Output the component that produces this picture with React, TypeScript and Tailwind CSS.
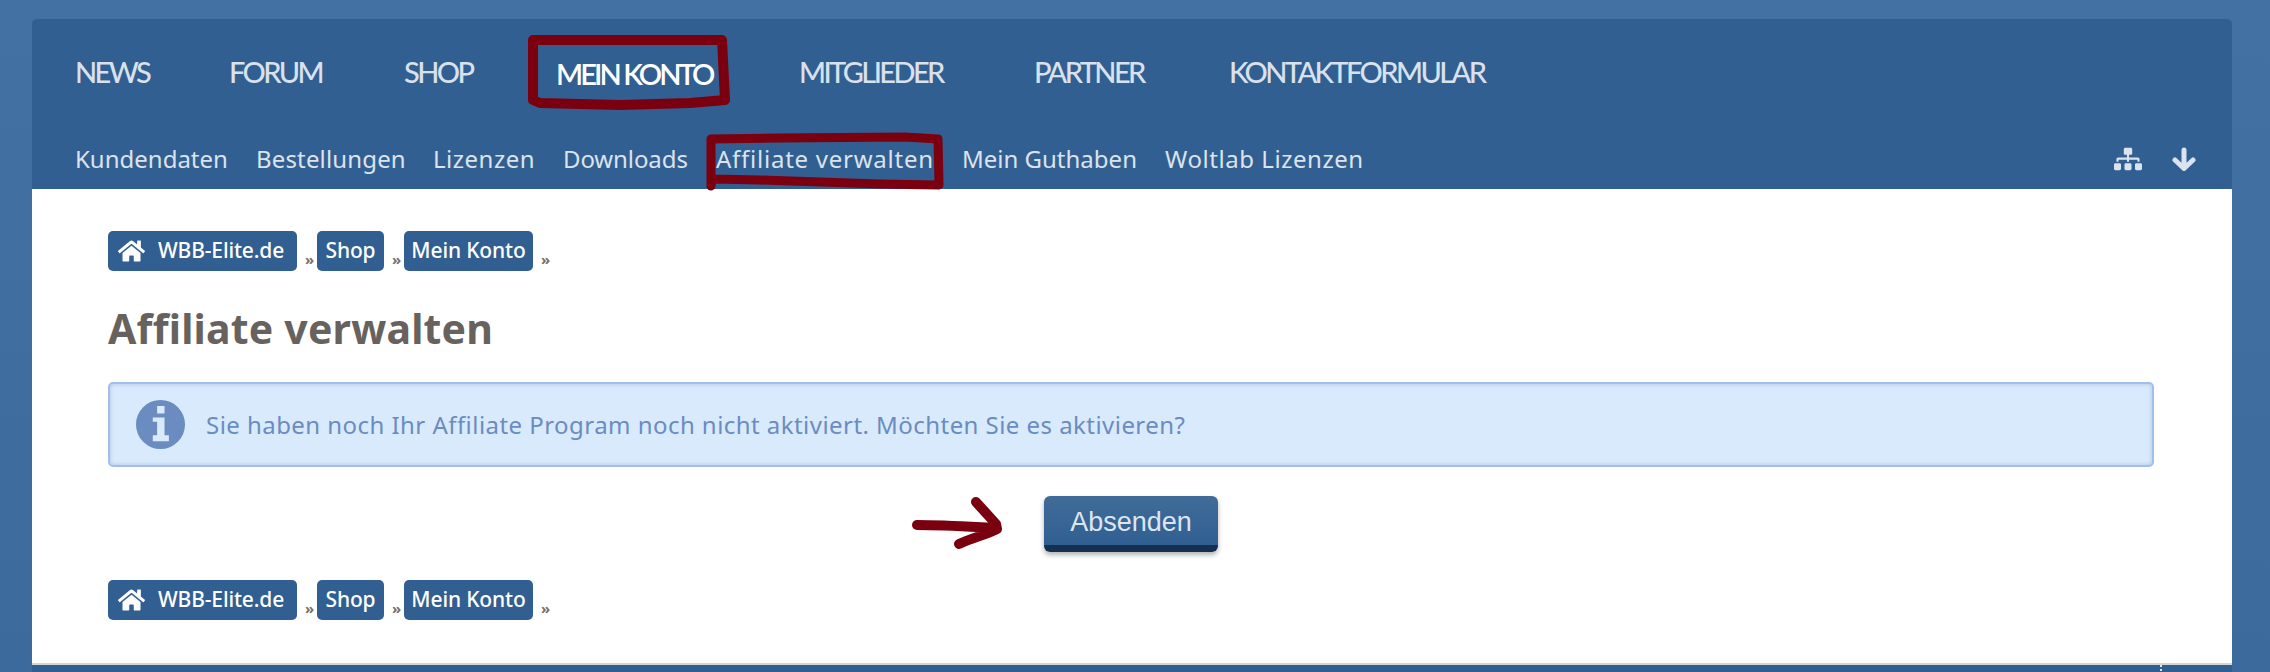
import { FaSitemap, FaHome } from "react-icons/fa";

const main = [
  ["NEWS", 70],
  ["FORUM", 91],
  ["SHOP", 68],
  ["MEIN KONTO", 159],
  ["MITGLIEDER", 151],
  ["PARTNER", 111],
  ["KONTAKTFORMULAR", 257],
] as const;
const sub = [
  ["Kundendaten", 153, ""],
  ["Bestellungen", 149, "tracking-[0.15px]"],
  ["Lizenzen", 102, "tracking-[0.5px]"],
  ["Downloads", 125, "tracking-[-0.1px]"],
  ["Affiliate verwalten", 218, "tracking-[0.75px]"],
  ["Mein Guthaben", 175, ""],
  ["Woltlab Lizenzen", 199, "tracking-[0.55px]"],
] as const;

function Crumbs() {
  const chip = "flex h-10 items-center rounded-[5px] bg-[#325f91] text-white text-[21px] font-medium tracking-[-0.15px]";
  const sep = "w-5 pl-[5px] text-center text-[#77706b] text-[15px] font-bold self-end leading-[24px]";
  return (
    <div className="flex items-center">
      <a className={`${chip} w-[189px] pl-[10px]`}>
        <FaHome className="w-[27px] h-[24px] shrink-0" />
        <span className="ml-[13px]">WBB-Elite.de</span>
      </a>
      <span className={sep}>»</span>
      <a className={`${chip} w-[67px] justify-center`}>Shop</a>
      <span className={sep}>»</span>
      <a className={`${chip} w-[129px] justify-center`}>Mein Konto</a>
      <span className={sep}>»</span>
    </div>
  );
}

export default function App() {
  return (
    <div className="relative w-[2270px] h-[672px] overflow-hidden bg-gradient-to-b from-[#4371a4] to-[#3c6a9c] pt-[19px] pl-8 font-['Noto_Sans','Open_Sans',sans-serif] [font-variant-ligatures:none]">
      <div className="w-[2200px] h-[653px] bg-[#325f91] rounded-t-[5px]">
        <nav className="flex h-[98px] gap-[84px] pl-[43px] pt-[33px] font-['Lato',sans-serif]">
          {main.map(([t, w]) => (
            <a
              key={t}
              style={{ width: w }}
              className={`h-[40px] whitespace-nowrap text-[29px] leading-[40px] ${t === "MEIN KONTO" ? "mt-[2px] font-semibold tracking-[-2.9px] text-white" : "font-medium tracking-[-2.6px] text-[#d9e1ec]"}`}
            >
              {t}
            </a>
          ))}
        </nav>
        <div className="flex h-[72px] items-start justify-between pl-[43px] pr-[36px] pt-[22px]">
          <div className="flex gap-[28px]">
            {sub.map(([t, w, c]) => (
              <a key={t} style={{ width: w }} className={`text-[24px] leading-[40px] whitespace-nowrap text-[#dbe3ee] ${c}`}>
                {t}
              </a>
            ))}
          </div>
          <div className="flex items-center gap-[30px] h-[40px] text-[#dbe3ee]">
            <FaSitemap className="w-[28px] h-[24px]" />
            <svg width="24" height="24" viewBox="0 0 24 24" fill="none" stroke="currentColor" strokeWidth="5" strokeLinecap="round" strokeLinejoin="round">
              <path d="M12 3 V21 M3 13 L12 21.5 L21 13" />
            </svg>
          </div>
        </div>
        <main className="h-[476px] bg-white border-b-2 border-[#d5d5d5] px-[76px] pt-[42px]">
          <Crumbs />
          <h1 className="mt-[30px] text-[41px] leading-[54px] font-bold tracking-[0.2px] text-[#67625e]">Affiliate verwalten</h1>
          <div className="mt-[27px] flex h-[85px] w-[2046px] items-center rounded-[5px] border-2 border-[#a0bfeb] bg-[#d9eafc] pl-[26px] text-[24px] text-[#6a8cc0] shadow-[inset_0_0_4px_rgba(90,120,170,0.35)]">
            <svg className="shrink-0" width="49" height="49" viewBox="0 0 146 146">
              <circle cx="73" cy="73" r="73" fill="#6a8cc0" />
              <path fill="#d9eafc" d="M63 18 H85 V40 H63 Z M50 52 H85 V105 H98 V123 H50 V105 H63 V65 H50 Z" />
            </svg>
            <span className="ml-[21px] tracking-[0.45px]">Sie haben noch Ihr Affiliate Program noch nicht aktiviert. Möchten Sie es aktivieren?</span>
          </div>
          <div className="mt-[29px] flex justify-center pr-[2px]">
            <button className="h-[56px] w-[174px] rounded-[6px] border-b-[7px] border-[#15304f] bg-gradient-to-b from-[#406c98] to-[#315f92] pt-[4px] text-[27px] text-[#dde5f0] shadow-[0_3px_5px_rgba(0,0,0,0.3)] font-['Liberation_Sans',sans-serif]">
              Absenden
            </button>
          </div>
          <div className="mt-[28px]">
            <Crumbs />
          </div>
        </main>
      </div>
      <svg className="absolute left-0 top-0 pointer-events-none" width="2270" height="672" fill="none" stroke="#7a0010" strokeLinecap="round" strokeLinejoin="round">
        <path d="M533 40 L722 40 L725 100 L690 103 L620 105 L540 103 L533 100 Z" strokeWidth="10" />
        <path d="M711 139 L780 138 L905 137 L938 139 L939 185 L880 184 L760 180 L712 179 L711 186 Z M711 139 L711 180" strokeWidth="9" />
        <path d="M917 525 C945 525 975 527 996 528 M976 502 L996 524 L997 529 C985 535 972 538 959 544" strokeWidth="10" />
        <path d="M2161 665 V667 M2161 669 V671" stroke="#dfe5ee" strokeWidth="2" strokeLinecap="butt" />
      </svg>
    </div>
  );
}
